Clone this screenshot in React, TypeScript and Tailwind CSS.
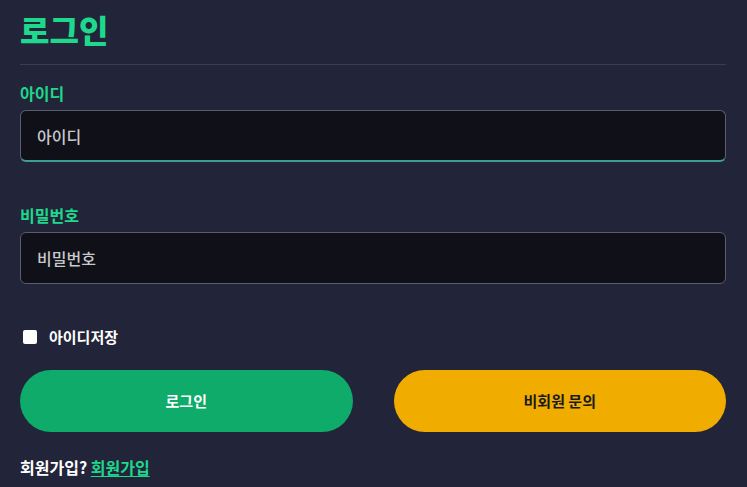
import { useState } from "react";

const font = { fontFamily: '"Noto Sans CJK KR", "Noto Sans", sans-serif' };

export default function App() {
  const [id, setId] = useState("");
  const [pw, setPw] = useState("");
  const [save, setSave] = useState(false);

  return (
    <div className="min-h-screen bg-[#22243a] pl-5 pr-[21px]" style={font}>
      <h1 className="pt-[9px] text-[32px] font-extrabold leading-[40px] text-[#1fd88c]">로그인</h1>
      <div className="mt-[15px] h-px bg-[#3a3c51]" />

      <label className="mt-4 block text-[16px] font-bold leading-6 text-[#1fd88c]">아이디</label>
      <input
        value={id}
        onChange={(e) => setId(e.target.value)}
        placeholder="아이디"
        className="mt-[5px] block h-[52px] w-full rounded-md border border-[#5b5d6c] border-b-2 border-b-[#3e9d93] bg-[#0f1018] px-4 text-[16px] font-medium text-[#d0d0d0] placeholder:text-[#c9c9cc] outline-none"
      />

      <label className="mt-[41px] block text-[16px] font-bold leading-6 text-[#1fd88c]">비밀번호</label>
      <input
        type="password"
        value={pw}
        onChange={(e) => setPw(e.target.value)}
        placeholder="비밀번호"
        className="mt-[5px] block h-[52px] w-full rounded-md border border-[#5b5d6c] bg-[#0f1018] px-4 text-[16px] font-medium text-[#d0d0d0] placeholder:text-[#c9c9cc] outline-none"
      />

      <label className="mt-[41px] flex h-6 items-center gap-3 pl-[3px] text-[15px] font-bold text-white">
        <input
          type="checkbox"
          checked={save}
          onChange={(e) => setSave(e.target.checked)}
          className="h-[14px] w-[14px] appearance-none rounded-[2px] bg-white"
        />
        아이디저장
      </label>

      <div className="mt-[21px] flex gap-[41px]">
        <button className="h-[62px] flex-1 rounded-full bg-[#0eab6a] text-[15px] font-bold text-white">로그인</button>
        <button className="h-[62px] flex-1 rounded-full bg-[#f0ad00] text-[15px] font-bold text-[#1b1b1b]">비회원 문의</button>
      </div>

      <p className="mt-[23px] text-[16px] font-bold leading-6 text-white">
        회원가입?{" "}
        <a href="#" className="text-[#1fd88c] underline underline-offset-2">회원가입</a>
      </p>
    </div>
  );
}
